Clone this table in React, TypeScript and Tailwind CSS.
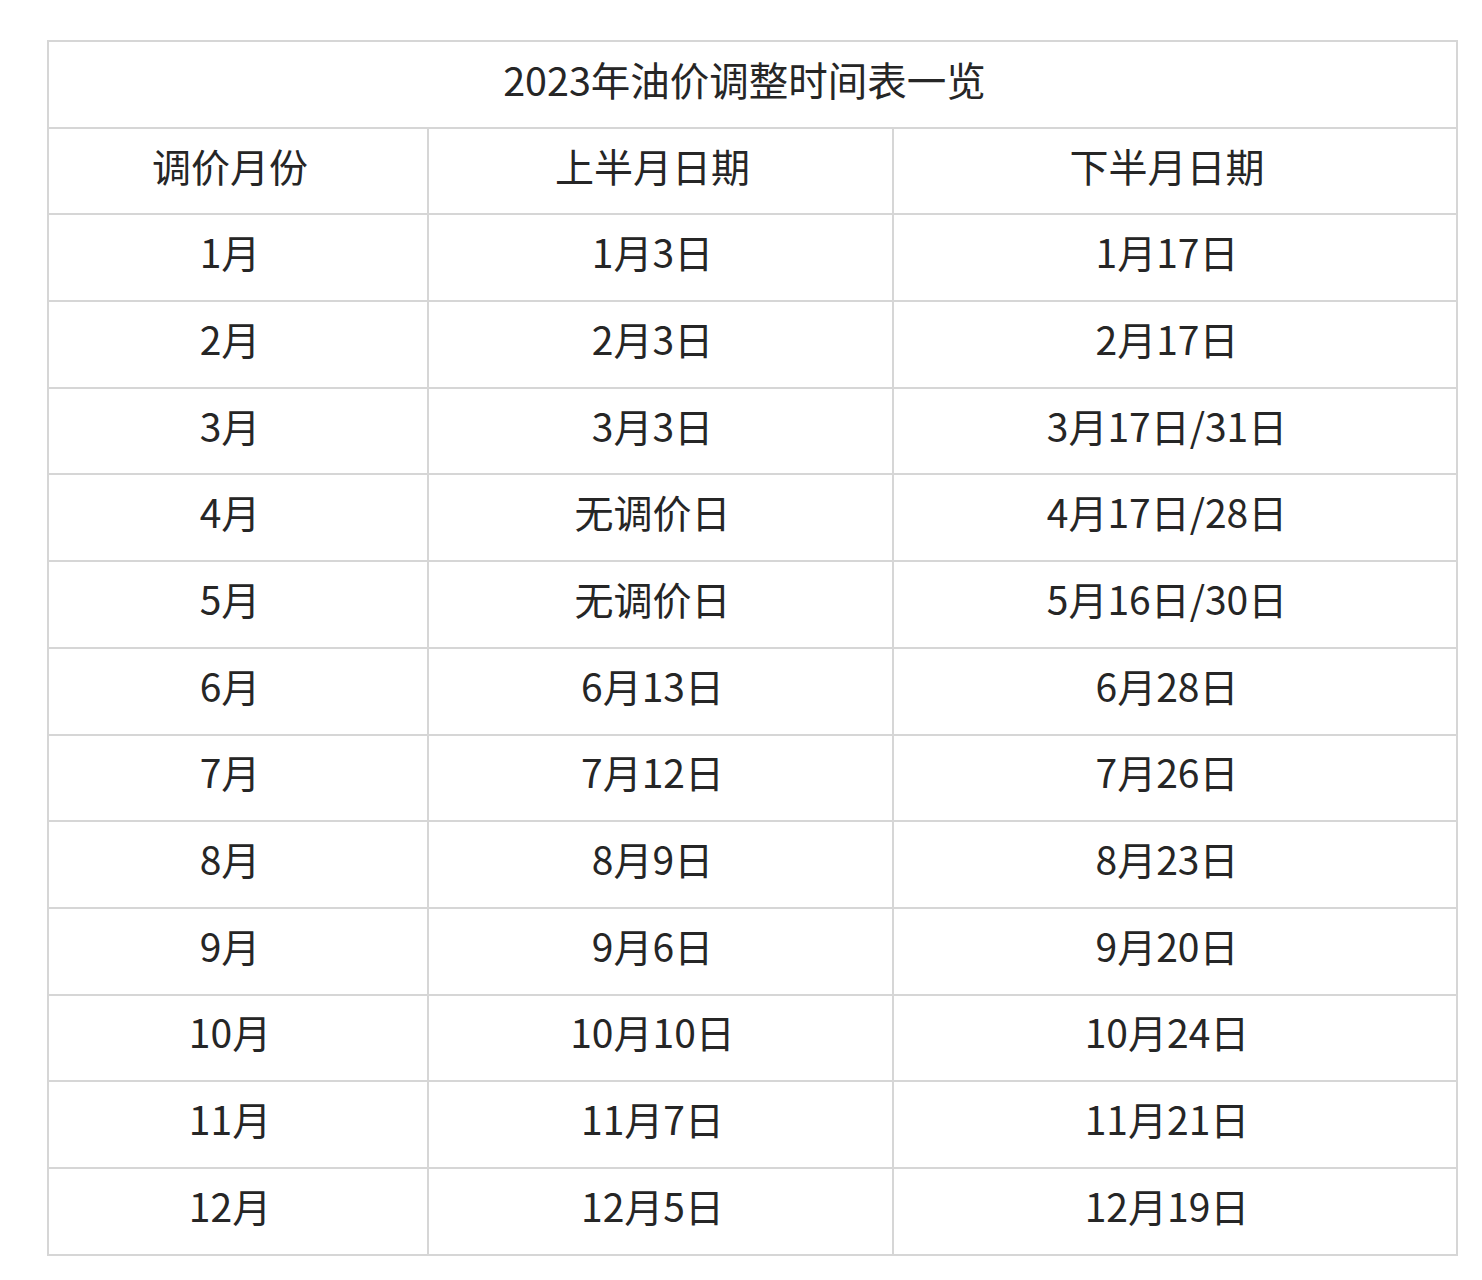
const rows: [string, string, string][] = [
  ["1月", "1月3日", "1月17日"],
  ["2月", "2月3日", "2月17日"],
  ["3月", "3月3日", "3月17日/31日"],
  ["4月", "无调价日", "4月17日/28日"],
  ["5月", "无调价日", "5月16日/30日"],
  ["6月", "6月13日", "6月28日"],
  ["7月", "7月12日", "7月26日"],
  ["8月", "8月9日", "8月23日"],
  ["9月", "9月6日", "9月20日"],
  ["10月", "10月10日", "10月24日"],
  ["11月", "11月7日", "11月21日"],
  ["12月", "12月5日", "12月19日"],
];

const cell = "border-2 border-[#d6d6d6] text-center align-middle h-[86.7px] pt-0 pl-0 pr-[16px] pb-[12px]";

export default function App() {
  return (
    <div className="min-h-[1280px] bg-white pt-[40px] pl-[47px] font-['Noto_Sans_CJK_SC','Noto_Sans',sans-serif] text-[#262626]">
      <table className="w-[1411px] border-collapse table-fixed text-[39px] leading-none">
        <colgroup>
          <col className="w-[380px]" />
          <col className="w-[465px]" />
          <col />
        </colgroup>
        <tbody>
          <tr>
            <td colSpan={3} className={`${cell} text-[39.5px]`}>
              2023年油价调整时间表一览
            </td>
          </tr>
          <tr>
            <td className={cell}>调价月份</td>
            <td className={cell}>上半月日期</td>
            <td className={cell}>下半月日期</td>
          </tr>
          {rows.map((r) => (
            <tr key={r[0]}>
              <td className={cell}>{r[0]}</td>
              <td className={cell}>{r[1]}</td>
              <td className={cell}>{r[2]}</td>
            </tr>
          ))}
        </tbody>
      </table>
    </div>
  );
}
